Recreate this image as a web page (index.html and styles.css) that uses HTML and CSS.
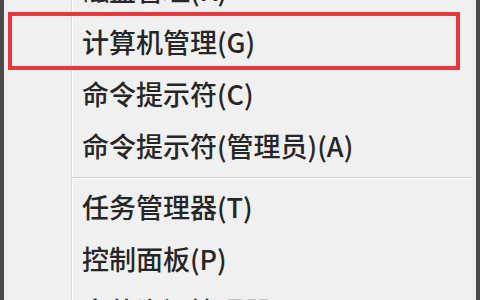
FILE: index.html
```html
<!DOCTYPE html>
<html lang="zh-CN">

<head>
    <meta charset="UTF-8">
    <meta name="viewport" content="width=device-width, initial-scale=1.0">
    <title>快捷菜单</title>
    <link rel="stylesheet" href="styles.css">
</head>

<body>

    <div class="menu">
        <!-- Colonne des icônes (vide) -->
        <div class="gutter"></div>

        <ul class="items">
            <li class="item">磁盘管理(K)</li>
            <li class="item">计算机管理(G)</li>
            <li class="item">命令提示符(C)</li>
            <li class="item">命令提示符(管理员)(A)</li>
            <li class="sep"></li>
            <li class="item">任务管理器(T)</li>
            <li class="item">控制面板(P)</li>
            <li class="item">文件资源管理器(E)</li>
        </ul>

        <!-- Cadre rouge autour de l'élément sélectionné -->
        <div class="highlight"></div>
    </div>

</body>

</html>
```

FILE: styles.css
```css
html,
body {
    margin: 0;
    padding: 0;
    height: 100%;
    overflow: hidden;
}

body {
    font-family: 'Noto Sans CJK SC', 'Noto Sans', sans-serif;
    background-color: #f0f0f0;
    color: #262626;
}

.menu {
    position: relative;
    display: flex;
    height: 300px;
    background-color: #f0f0f0;
    border-left: 4px solid #4a4a4a;
    border-right: 4px solid #4a4a4a;
    overflow: hidden;
}

.gutter {
    width: 67px;
    flex-shrink: 0;
    border-right: 1px solid #dadada;
    box-shadow: 1px 0 0 #ffffff;
}

.items {
    flex: 1;
    list-style: none;
    margin: -36px 0 0 0;
    padding: 0;
}

.item {
    height: 52px;
    line-height: 52px;
    padding-left: 10px;
    font-size: 27px;
    font-weight: 500;
    white-space: nowrap;
}

.sep {
    height: 1px;
    margin: 5px 4px 2px 0;
    background-color: #d5d5d5;
    border-bottom: 1px solid #ffffff;
}

.highlight {
    position: absolute;
    left: 4px;
    top: 12px;
    width: 452px;
    height: 58px;
    box-sizing: border-box;
    border: 4px solid #e8383d;
}
```
